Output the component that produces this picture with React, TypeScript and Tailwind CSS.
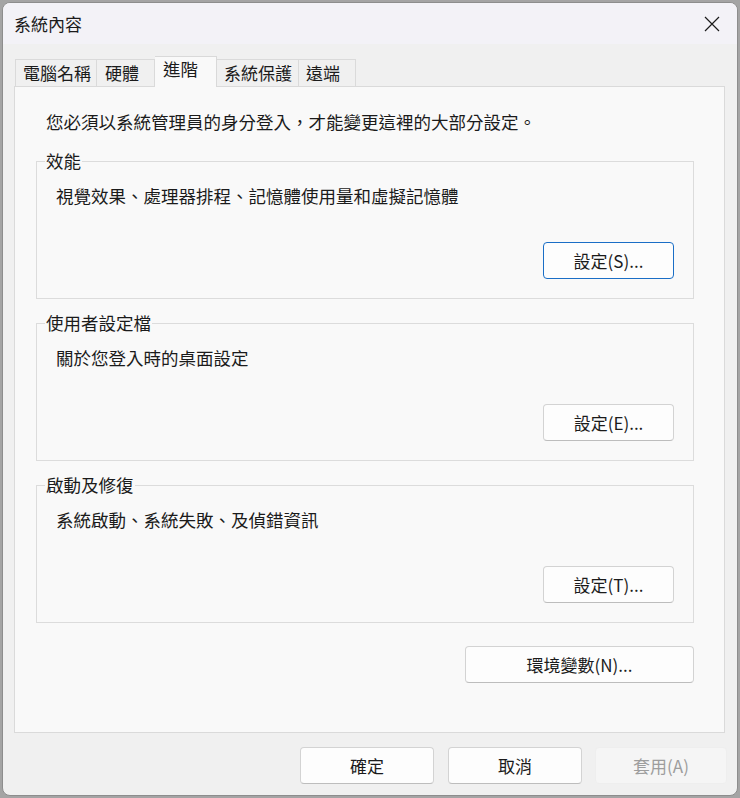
const tabs = [
  { label: '電腦名稱', cls: 'w-[82px] pl-[7px] border-l' },
  { label: '硬體', cls: 'w-[58px] pl-[8px]' },
  { label: '進階', cls: 'w-[62px] pl-[8px]', active: true },
  { label: '系統保護', cls: 'w-[82px] pl-[7px]' },
  { label: '遠端', cls: 'w-[57px] pl-[7px]' },
]

const groups = [
  { title: '效能', text: '視覺效果、處理器排程、記憶體使用量和虛擬記憶體', button: '設定(S)...', focused: true },
  { title: '使用者設定檔', text: '關於您登入時的桌面設定', button: '設定(E)...' },
  { title: '啟動及修復', text: '系統啟動、系統失敗、及偵錯資訊', button: '設定(T)...' },
]

function Button({ children, className = '', focused = false, disabled = false }: { children: React.ReactNode; className?: string; focused?: boolean; disabled?: boolean }) {
  let look = 'bg-[#fdfdfd] border-[#d3d3d3] border-b-[#bdbdbd] text-[#1b1b1b]'
  if (focused) look = 'bg-[#fdfdfd] border-[#1a6ec6] text-[#1b1b1b]'
  if (disabled) look = 'bg-[#f5f5f5] border-[#eeeeee] text-[#9d9d9d]'
  return (
    <button className={`h-[37px] rounded-[4px] border flex items-center justify-center text-[17px] ${look} ${className}`}>
      {children}
    </button>
  )
}

function Group({ title, text, button, focused }: { title: string; text: string; button: string; focused?: boolean }) {
  return (
    <fieldset className="w-[658px] border border-[#dcdcdc] pb-[19px]">
      <legend className="ml-[8px] px-[1px] leading-[22px]">{title}</legend>
      <p className="mt-[12px] pl-[19px] leading-[24px]">{text}</p>
      <div className="mt-[34px] pr-[19px] flex justify-end">
        <Button focused={focused} className="w-[131px]">{button}</Button>
      </div>
    </fieldset>
  )
}

export default function App() {
  return (
    <div className="w-[740px] h-[798px] bg-[#a4a4a4] p-[2px] font-['Noto_Sans_CJK_TC','Noto_Sans',sans-serif] text-[17.5px] text-[#1b1b1b]">
      <div className="w-[736px] h-[794px] rounded-[8px] border border-[#8d8d8d] bg-[#f0f0f0] overflow-hidden flex flex-col">
        <div className="h-[41px] bg-[#f3f2f7] flex items-center justify-between pl-[11px] pr-[16px]">
          <span className="text-[17px]">系統內容</span>
          <svg width="16" height="16" viewBox="0 0 16 16" className="mr-[1px]">
            <path d="M1 1 L15 15 M15 1 L1 15" stroke="#1b1b1b" strokeWidth="1.2" fill="none" />
          </svg>
        </div>

        <div className="mt-[12px] ml-[12px] h-[30px] flex items-end">
          {tabs.map((t) =>
            t.active ? (
              <div key={t.label} className={`relative z-10 -mb-px h-[31px] bg-[#f9f9f9] border-t border-r border-[#d9d9d9] flex items-center pb-[5px] ${t.cls}`}>
                {t.label}
              </div>
            ) : (
              <div key={t.label} className={`h-[27px] bg-[#f0f0f0] border-t border-r border-[#dadada] flex items-center text-[17px] ${t.cls}`}>
                {t.label}
              </div>
            )
          )}
        </div>

        <div className="ml-[11px] w-[711px] h-[647px] bg-[#f9f9f9] border border-[#dadada]">
          <p className="mt-[23px] pl-[31px] leading-[24px]">您必須以系統管理員的身分登入，才能變更這裡的大部分設定。</p>
          <div className="pl-[21px] mt-[16px] flex flex-col gap-[13px]">
            {groups.map((g) => (
              <Group key={g.title} {...g} />
            ))}
          </div>
          <div className="pl-[21px] mt-[23px] w-[680px] flex justify-end">
            <Button className="w-[229px] mr-[1px]">環境變數(N)...</Button>
          </div>
        </div>

        <div className="mt-[14px] pr-[10px] flex justify-end">
          <Button className="w-[134px]">確定</Button>
          <Button className="w-[134px] ml-[14px]">取消</Button>
          <Button disabled className="w-[132px] ml-[13px]">套用(A)</Button>
        </div>
      </div>
    </div>
  )
}
